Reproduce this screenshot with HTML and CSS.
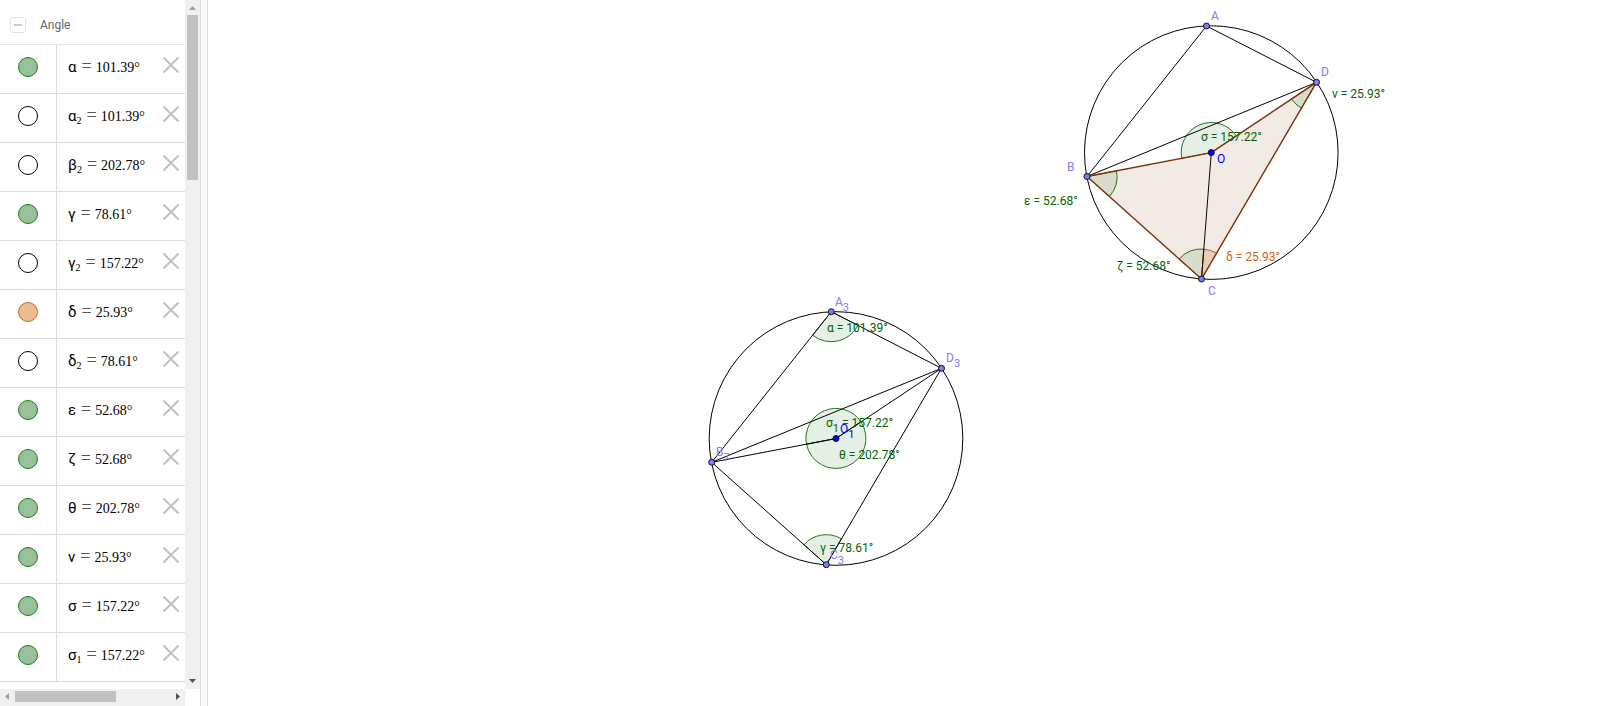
FILE: index.html
```html
<!DOCTYPE html>
<html lang="en">
<head>
<meta charset="utf-8">
<title>Geometry</title>
<link rel="stylesheet" href="styles.css">
</head>
<body>
<div class="app">
  <aside class="algebra">
    <div class="main">
      <section class="list">
        <header class="group">
          <button class="collapse" aria-label="Collapse"></button>
          <h2>Angle</h2>
        </header>
        <ul class="rows" id="rows"></ul>
      </section>
      <div class="vbar">
        <svg class="arrow" viewBox="0 0 15 15"><path d="M4 10 7.500 6 11 10z" fill="#a0a0a0"/></svg>
        <div class="vtrack"><div class="vthumb"></div></div>
        <svg class="arrow" viewBox="0 0 15 15"><path d="M4 5 7.500 9 11 5z" fill="#505050"/></svg>
      </div>
    </div>
    <div class="hbar">
      <svg class="arrow" viewBox="0 0 15 15"><path d="M9 4 5 7.500 9 11z" fill="#a0a0a0"/></svg>
      <div class="htrack"><div class="hthumb"></div></div>
      <svg class="arrow" viewBox="0 0 15 15"><path d="M6 4 10 7.500 6 11z" fill="#505050"/></svg>
    </div>
  </aside>
  <div class="splitter"></div>
  <main class="canvas">
    <svg class="drawing" viewBox="0 0 1408 706" preserveAspectRatio="xMinYMin meet">
      <g class="angle">
        <path d="M1003.300 152.600 973.800 158.300A30 30 0 0 1 1028.200 135.900Z"/>
        <path d="M879 176.500 908.500 170.800A30 30 0 0 1 901.400 196.500Z"/>
        <path d="M993.500 279 971.100 259A30 30 0 0 1 995.800 249.100Z"/>
        <path class="orange" d="M993.500 279 995.800 249.100A30 30 0 0 1 1008.600 253.100Z"/>
        <path d="M1108.500 82.300 1083.600 99A30 30 0 0 0 1093.400 108.200Z"/>
        <path d="M623.300 311.700 604.600 335.200A30 30 0 0 0 650 325.400Z"/>
        <path d="M618.300 564.700 595.900 544.700A30 30 0 0 1 633.400 538.800Z"/>
        <path d="M628 438.500 598.500 444.200A30 30 0 0 1 652.900 421.800Z"/>
        <path d="M628 438.500 598.500 444.200A30 30 0 1 0 652.900 421.800Z"/>
      </g>
      <g class="line">
        <circle cx="1003.300" cy="152.600" r="126.800"/>
        <circle cx="628" cy="438.500" r="126.800"/>
        <path d="M1108.500 82.300 998.500 26 879 176.500ZM1003.300 152.600 993.500 279"/>
        <path d="M733.500 368.300 623.300 311.700 503.700 462.300ZM503.700 462.300 628 438.500 733.500 368.300 618.300 564.700Z"/>
      </g>
      <path class="quad" d="M1003.300 152.600 879 176.500 993.500 279 1108.500 82.300Z"/>
      <g class="point">
        <circle cx="998.500" cy="26" r="3"/><circle cx="1108.500" cy="82.300" r="3"/>
        <circle cx="879" cy="176.500" r="3"/><circle cx="993.500" cy="279" r="3"/>
        <circle class="center" cx="1003.300" cy="152.600" r="3"/>
        <circle cx="623.300" cy="311.700" r="3"/><circle cx="733.500" cy="368.300" r="3"/>
        <circle cx="503.700" cy="462.300" r="3"/><circle cx="618.300" cy="564.700" r="3"/>
        <circle class="center" cx="628" cy="438.500" r="3"/>
      </g>
      <g class="measure">
        <text x="1124" y="98">ν = 25.93°</text>
        <text x="993" y="141">σ = 157.22°</text>
        <text x="816" y="205">ε = 52.68°</text>
        <text x="909" y="270">ζ = 52.68°</text>
        <text class="orange" x="1018" y="261">δ = 25.93°</text>
        <text x="619" y="332">α = 101.39°</text>
        <text x="618" y="427">σ<tspan class="sub" dy="5">1</tspan><tspan dy="-5"> = 157.22°</tspan></text>
        <text x="631" y="459">θ = 202.78°</text>
        <text x="612" y="552">γ = 78.61°</text>
      </g>
      <g class="name">
        <text x="1003" y="20">A</text>
        <text x="1113" y="76">D</text>
        <text x="859" y="171">B</text>
        <text x="1000" y="295">C</text>
        <text class="center" x="1009" y="163">O</text>
        <text x="627" y="306">A<tspan class="sub" dy="5">3</tspan></text>
        <text x="738" y="362">D<tspan class="sub" dy="5">3</tspan></text>
        <text x="508" y="456">B<tspan class="sub" dy="5">7</tspan></text>
        <text x="622" y="559">C<tspan class="sub" dy="5">3</tspan></text>
        <text class="center" x="632" y="433">O<tspan class="sub" dy="5">1</tspan></text>
      </g>
    </svg>
  </main>
</div>
<script src="rows.js"></script>
</body>
</html>
```
FILE: styles.css
```css
* { box-sizing: border-box; }
body { margin: 0; font-family: Roboto, "Noto Sans", sans-serif; background: #fff; }
.app { display: flex; height: 100vh; overflow: hidden; }
.algebra { flex: 0 0 200px; display: flex; flex-direction: column; }
.main { flex: 1; min-height: 0; display: flex; }
.list { flex: 1; min-width: 0; overflow: hidden; }
.group { display: flex; align-items: center; gap: 14px; height: 45px; padding: 5px 0 0 10px; border-bottom: 1px solid #e6e6e6; }
.group h2 { margin: 0; font-size: 12px; font-weight: 400; line-height: 16px; color: #666; }
.collapse { width: 16px; height: 16px; padding: 0; border: 1px solid #e2e2e2; border-radius: 3px; background: #fff; display: grid; place-items: center; }
.collapse::before { content: ""; width: 8px; height: 2px; background: #ccc; }
.rows { list-style: none; margin: 0; padding: 0; }
.row { display: flex; height: 49px; border-bottom: 1px solid #dcdcdc; }
.marble { flex: 0 0 57px; padding: 0 0 4px; border: 0; border-right: 1px solid #dcdcdc; background: none; display: grid; place-items: center; }
.marble::before { content: ""; width: 18px; height: 18px; border: 1px solid #000; border-radius: 50%; }
.marble.green::before { border-color: #1c7a1c; background: #99c199; }
.marble.orange::before { border-color: #cc6e1c; background: #ebbd93; }
.formula { flex: 1; display: flex; align-items: baseline; padding: 11px 0 0 11px; font-size: 15px; line-height: 20px; color: #000; white-space: nowrap; }
.formula sub { font-family: "Liberation Serif", serif; font-size: 10px; line-height: 10px; position: relative; top: 3px; vertical-align: baseline; }
.eq { margin: 0 4px 0 5px; font-family: "Liberation Serif", serif; font-size: 18px; color: #555; }
.num { font-family: "Liberation Serif", serif; font-size: 14px; }
.delete { flex: 0 0 28px; padding: 12px 6px 0 6px; border: 0; background: none; display: block; }
.delete svg { display: block; width: 16px; height: 16px; stroke: #c0c0c0; stroke-width: 2; margin-bottom: 20px; }
.arrow { flex: 0 0 15px; width: 15px; height: 15px; display: block; }
.vbar { flex: 0 0 15px; display: flex; flex-direction: column; background: #f0f0f0; }
.vtrack { flex: 1; padding: 0 2px; }
.vthumb { height: 25%; background: #c1c1c1; }
.hbar { display: flex; width: 185px; height: 17px; padding-bottom: 2px; background: #f0f0f0; }
.htrack { flex: 1; padding: 2px 0; }
.hthumb { width: 65%; height: 100%; background: #c1c1c1; }
.splitter { flex: 0 0 8px; border: 1px solid #dcdcdc; background: #f9f9f9; border-width: 0 1px; }
.canvas { flex: 1; min-width: 0; }
.drawing { display: block; width: 100%; height: auto; font-size: 12px; }
.angle path { fill: #060; fill-opacity: .1; stroke: #1c7a1c; }
.angle .orange { fill: #cc6114; fill-opacity: .2; stroke: #cc6114; }
.line { fill: none; stroke: #000; }
.quad { fill: #7a3000; fill-opacity: .1; stroke: #7d300a; stroke-width: 1.4; }
.point { fill: #7d7dff; stroke: #111; }
.point .center { fill: #00f; }
.measure { fill: #060; }
.measure .orange { fill: #cc6114; }
.name { fill: #7d7dff; }
.name .center { fill: #00f; }
.sub { font-size: 11px; }
```
FILE: rows.js
```js
const angles = [
  ["α", "", "101.39°", "green"],
  ["α", "2", "101.39°", ""],
  ["β", "2", "202.78°", ""],
  ["γ", "", "78.61°", "green"],
  ["γ", "2", "157.22°", ""],
  ["δ", "", "25.93°", "orange"],
  ["δ", "2", "78.61°", ""],
  ["ε", "", "52.68°", "green"],
  ["ζ", "", "52.68°", "green"],
  ["θ", "", "202.78°", "green"],
  ["ν", "", "25.93°", "green"],
  ["σ", "", "157.22°", "green"],
  ["σ", "1", "157.22°", "green"]
];
document.getElementById("rows").innerHTML = angles.map(([n, s, v, c]) => `
  <li class="row">
    <button class="marble ${c}" aria-label="Show or hide ${n}${s}"></button>
    <div class="formula"><span>${n}</span>${s ? `<sub>${s}</sub>` : ""}<span class="eq">=</span><span class="num">${v}</span></div>
    <button class="delete" aria-label="Delete ${n}${s}"><svg viewBox="0 0 16 16"><path d="M0.500 0.500 15.500 15.500M15.500 0.500 0.500 15.500"/></svg></button>
  </li>`).join("");
```
